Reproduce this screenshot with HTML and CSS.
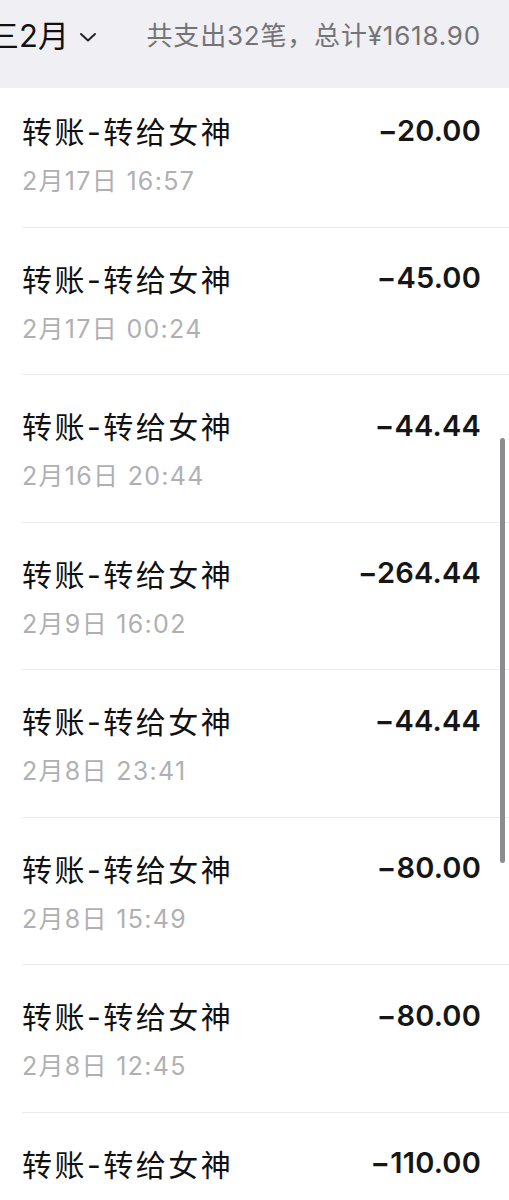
FILE: index.html
```html
<!DOCTYPE html>
<html lang="zh-CN">

<head>
    <meta charset="UTF-8">
    <title>账单</title>
    <link rel="stylesheet" href="styles.css">
</head>

<body>
    <div class="header">
        <div class="month">
            <span class="month-label">三2月</span>
            <svg class="chevron" width="18" height="12" viewBox="0 0 18 12">
                <path d="M2 3 L9 9.5 L16 3" fill="none" stroke="#222" stroke-width="2" stroke-linecap="round" stroke-linejoin="round" />
            </svg>
        </div>
        <div class="summary">共支出32笔，总计¥1618.90</div>
    </div>

    <div class="list-wrap">
        <ul class="bill-list" id="billList">
            <!-- 账单行 -->
        </ul>
        <div class="scrollbar"></div>
    </div>

    <script>
        const bills = [
            { title: '转账-转给女神', time: '2月17日 16:57', amount: '-20.00' },
            { title: '转账-转给女神', time: '2月17日 00:24', amount: '-45.00' },
            { title: '转账-转给女神', time: '2月16日 20:44', amount: '-44.44' },
            { title: '转账-转给女神', time: '2月9日 16:02', amount: '-264.44' },
            { title: '转账-转给女神', time: '2月8日 23:41', amount: '-44.44' },
            { title: '转账-转给女神', time: '2月8日 15:49', amount: '-80.00' },
            { title: '转账-转给女神', time: '2月8日 12:45', amount: '-80.00' },
            { title: '转账-转给女神', time: '2月8日 11:20', amount: '-110.00' }
        ];

        const list = document.getElementById('billList');
        bills.forEach(item => {
            const row = document.createElement('li');
            row.className = 'bill';
            row.innerHTML = `
                <div class="bill-top">
                    <span class="bill-title">${item.title}</span>
                    <span class="bill-amount">${item.amount.replace('-', '−')}</span>
                </div>
                <div class="bill-time">${item.time}</div>
            `;
            list.appendChild(row);
        });
    </script>
</body>

</html>
```

FILE: styles.css
```css
body {
    margin: 0;
    background: #fff;
    font-family: "Inter", "Noto Sans CJK SC", sans-serif;
    width: 509px;
    height: 1200px;
    overflow: hidden;
}

.header {
    position: relative;
    z-index: 2;
    height: 88px;
    background: #f0eff4;
    display: flex;
    align-items: flex-start;
    justify-content: space-between;
    padding: 0 28px 0 0;
    box-sizing: border-box;
}

.month {
    display: flex;
    align-items: center;
    gap: 10px;
    margin-left: -12px;
    margin-top: 14px;
}

.month-label {
    font-size: 31px;
    color: #111;
    line-height: 44px;
}

.chevron {
    margin-top: 2px;
}

.summary {
    font-size: 26px;
    letter-spacing: 0.8px;
    color: #747477;
    margin-top: 16px;
    line-height: 40px;
}

.list-wrap {
    position: relative;
}

.bill-list {
    list-style: none;
    margin: -8px 0 0;
    padding: 0;
}

.bill {
    margin-left: 22px;
    padding: 30px 28px 0 0;
    height: 147.5px;
    box-sizing: border-box;
    border-bottom: 1px solid #ececec;
}

.bill-top {
    display: flex;
    justify-content: space-between;
    align-items: center;
    height: 40px;
}

.bill-title {
    font-size: 30px;
    letter-spacing: 2.5px;
    color: #111;
}

.bill-amount {
    font-size: 29px;
    font-weight: 600;
    letter-spacing: 0.2px;
    color: #161616;
}

.bill-time {
    margin-top: 11px;
    font-size: 25px;
    letter-spacing: 1.3px;
    color: #b0b0b2;
    line-height: 40px;
}

.scrollbar {
    position: absolute;
    right: 4px;
    top: 358px;
    width: 5px;
    height: 425px;
    border-radius: 3px;
    background: #8c8c8e;
}
```
